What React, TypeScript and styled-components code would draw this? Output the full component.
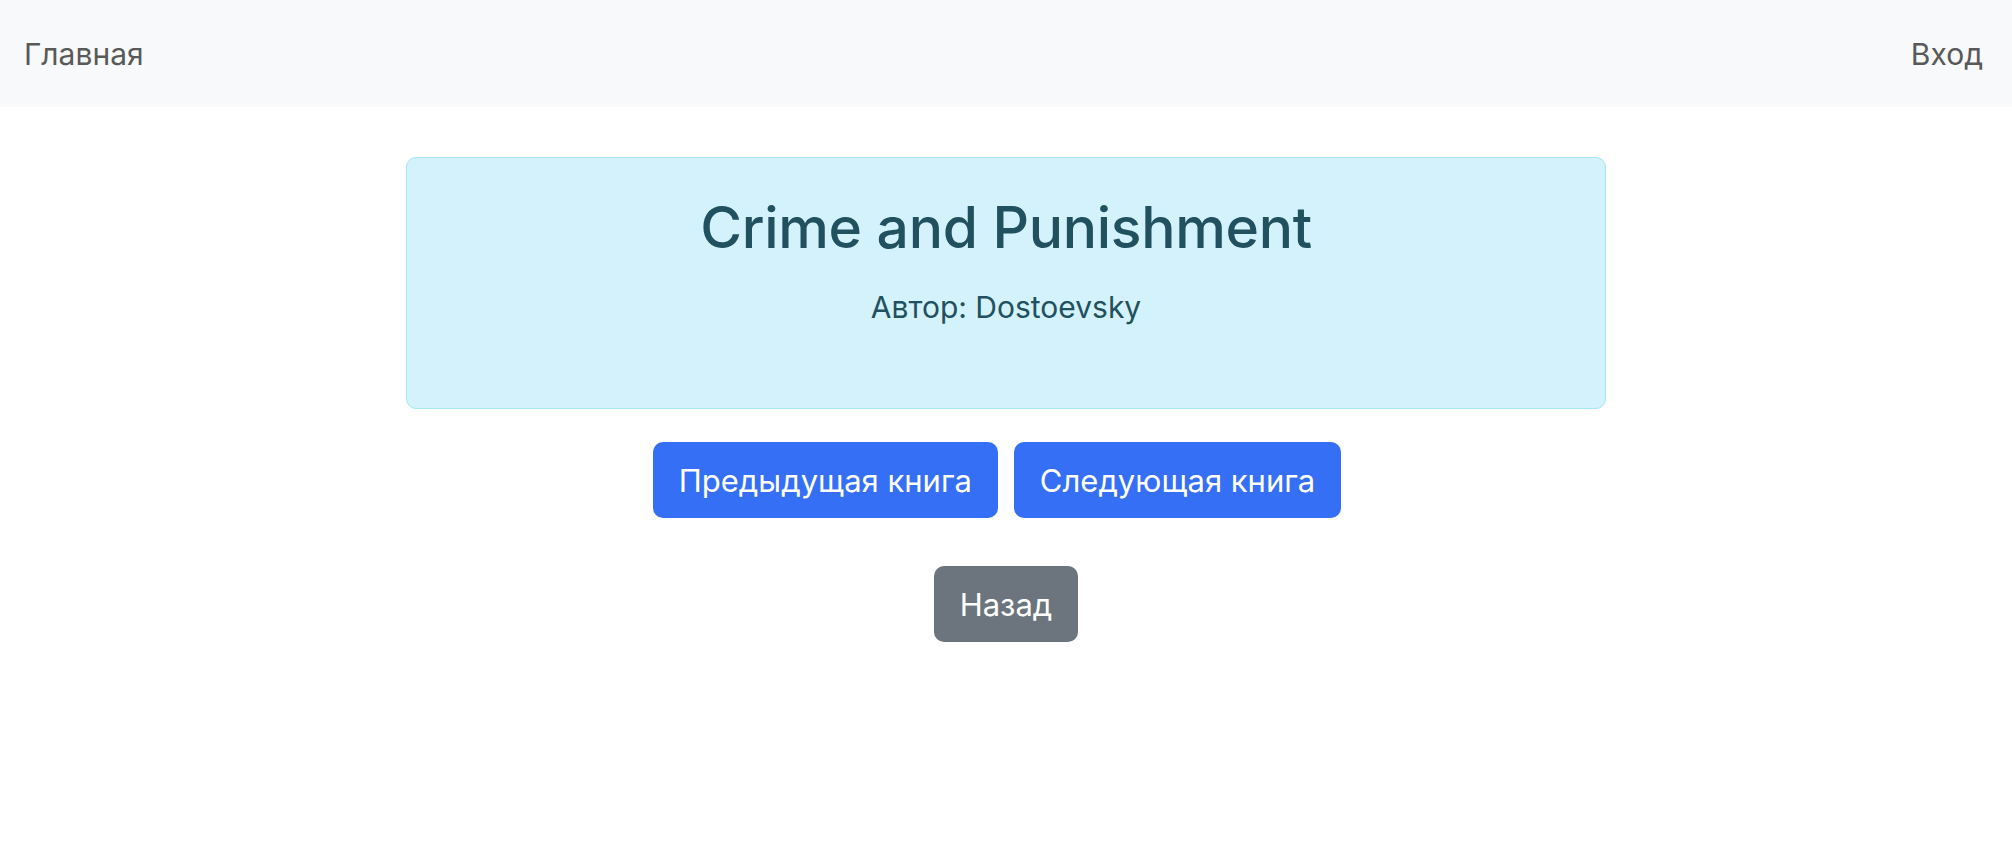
import * as React from 'react';
import styled, { createGlobalStyle } from "styled-components";

const GlobalStyle = createGlobalStyle`
  body {
    margin: 0;
    background: #ffffff;
    font-family: Inter, "Noto Sans", sans-serif;
  }
`;

const Navbar = styled.nav`
  height: 107px;
  background: #f8f9fa;
  display: flex;
  align-items: center;
  justify-content: space-between;
  padding: 0 29px 0 24px;
`;

const NavLink = styled.a`
  font-size: 30px;
  color: #595959;
  text-decoration: none;
  cursor: pointer;
`;

const Main = styled.main`
  display: flex;
  flex-direction: column;
  align-items: center;
  padding-top: 50px;
`;

const BookCard = styled.div`
  width: 1200px;
  box-sizing: border-box;
  background: #d4f2fb;
  border: 1px solid #a6e5f5;
  border-radius: 10px;
  padding: 34px 33px 34px;
  text-align: center;
  color: #21505f;
`;

const Title = styled.h1`
  margin: 0 0 22px;
  font-size: 57px;
  font-weight: 500;
  line-height: 72px;
  letter-spacing: -0.3px;
`;

const Author = styled.p`
  margin: 0 0 46px;
  font-size: 30px;
  line-height: 42px;
`;

const ButtonRow = styled.div`
  display: flex;
  gap: 16px;
  margin-top: 33px;
  padding-right: 18px;
`;

const Button = styled.button<{ $variant?: "primary" | "secondary" }>`
  height: 76px;
  padding: 0 26px;
  border: none;
  border-radius: 10px;
  font-family: Inter, "Noto Sans", sans-serif;
  font-size: 31px;
  color: #ffffff;
  cursor: pointer;
  background: ${(p) => (p.$variant === "secondary" ? "#6c757d" : "#346ff5")};
`;

const BackWrapper = styled.div`
  margin-top: 48px;
`;

const App = () => {
  return (
    <>
      <GlobalStyle />
      <Navbar>
        <NavLink>Главная</NavLink>
        <NavLink>Вход</NavLink>
      </Navbar>
      <Main>
        <BookCard>
          <Title>Crime and Punishment</Title>
          <Author>Автор: Dostoevsky</Author>
        </BookCard>
        <ButtonRow>
          <Button>Предыдущая книга</Button>
          <Button>Следующая книга</Button>
        </ButtonRow>
        <BackWrapper>
          <Button $variant="secondary">Назад</Button>
        </BackWrapper>
      </Main>
    </>
  );
};

export default App;
